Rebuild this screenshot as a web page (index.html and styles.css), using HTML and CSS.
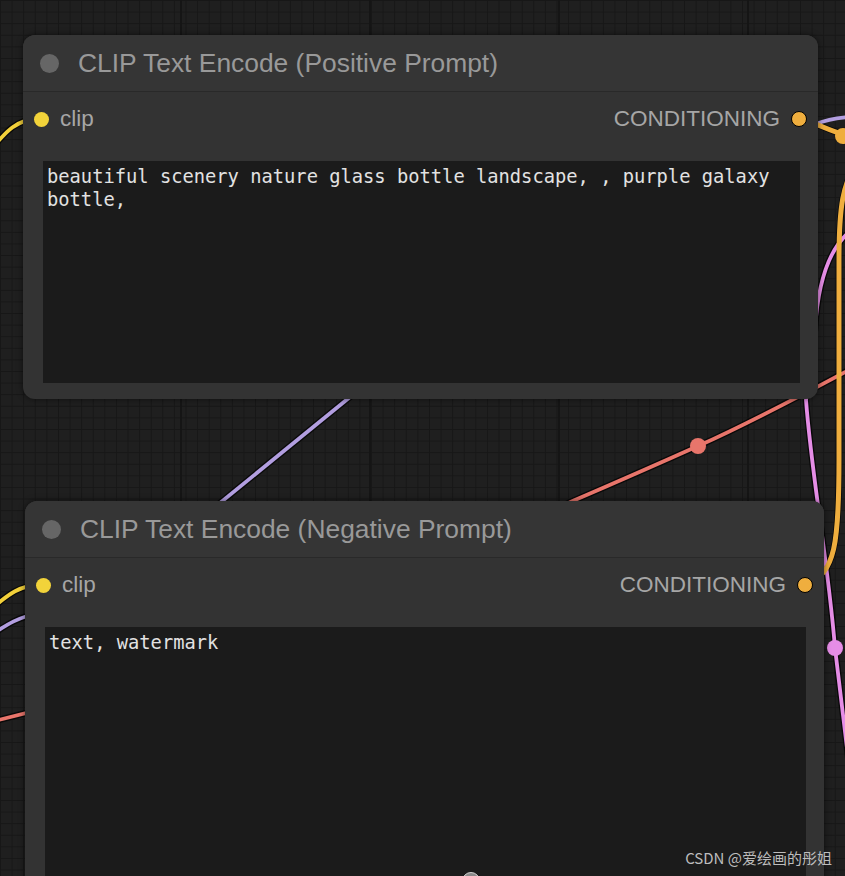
FILE: index.html
```
<!DOCTYPE html>
<html lang="en">
<head>
    <meta charset="UTF-8">
    <meta name="viewport" content="width=device-width, initial-scale=1.0">
    <title>CLIP Text Encode</title>
    <link rel="stylesheet" href="styles.css">
</head>
<body>
    <div class="canvas">
        <!-- links are drawn under the nodes -->
        <svg class="links" width="845" height="876" viewBox="0 0 845 876">
            <g class="link-shadow">
                <path d="M -20 162 C 0 142, 8 120, 40 118"/>
                <path d="M -10 610 C 5 598, 15 586, 42 584"/>
                <path d="M -10 636 C 5 626, 15 618, 42 612"/>
                <path d="M -10 722 C 250 660, 450 560, 575 500 Q 640 472, 698 446 T 860 364"/>
                <path d="M 150 560 L 420 340"/>
                <path d="M 860 225 C 830 240, 818 280, 815 330 L 806 400 C 812 480, 828 560, 835 648 L 852 790"/>
                <path d="M 798 118 C 820 124, 830 132, 850 136"/>
                <path d="M 805 584 C 836 576, 839 540, 839 460 L 839 260 C 839 210, 842 180, 860 160"/>
            </g>
            <path class="link link-clip" d="M -20 162 C 0 142, 8 120, 40 118"/>
            <path class="link link-clip" d="M -10 610 C 5 598, 15 586, 42 584"/>
            <path class="link link-model" d="M -10 636 C 5 626, 15 618, 42 612"/>
            <path class="link link-vae" d="M -10 722 C 250 660, 450 560, 575 500 Q 640 472, 698 446 T 860 364"/>
            <path class="link link-model" d="M 150 560 L 420 340"/>
            <path class="link link-latent" d="M 860 225 C 830 240, 818 280, 815 330 L 806 400 C 812 480, 828 560, 835 648 L 852 790"/>
            <path class="link link-model" d="M 816 124 C 826 120, 836 118, 850 117"/>
            <path class="link link-cond" d="M 798 118 C 820 124, 830 132, 850 136"/>
            <path class="link link-cond" d="M 805 584 C 836 576, 839 540, 839 460 L 839 260 C 839 210, 842 180, 860 160"/>
            <circle class="link-knob knob-vae" cx="698" cy="446" r="8"/>
            <circle class="link-knob knob-latent" cx="835" cy="648" r="8"/>
            <circle class="link-knob knob-cond" cx="843" cy="136" r="8"/>
        </svg>

        <div class="node node-positive">
            <div class="node-title">
                <span class="node-dot"></span>
                <span class="node-name">CLIP Text Encode (Positive Prompt)</span>
            </div>
            <div class="node-slots">
                <div class="slot">
                    <span class="slot-dot dot-clip"></span>
                    <span>clip</span>
                </div>
                <div class="slot">
                    <span>CONDITIONING</span>
                    <span class="slot-dot dot-cond"></span>
                </div>
            </div>
            <div class="node-text">beautiful scenery nature glass bottle landscape, , purple galaxy bottle,</div>
        </div>

        <div class="node node-negative">
            <div class="node-title">
                <span class="node-dot"></span>
                <span class="node-name">CLIP Text Encode (Negative Prompt)</span>
            </div>
            <div class="node-slots">
                <div class="slot">
                    <span class="slot-dot dot-clip"></span>
                    <span>clip</span>
                </div>
                <div class="slot">
                    <span>CONDITIONING</span>
                    <span class="slot-dot dot-cond"></span>
                </div>
            </div>
            <div class="node-text">text, watermark</div>
        </div>

        <span class="handle"></span>
        <div class="watermark">CSDN @爱绘画的彤姐</div>
    </div>
</body>
</html>
```
FILE: styles.css
```
body {
    margin: 0;
    background: #1d1d1d;
    font-family: "Liberation Sans", Arial, sans-serif;
}
.canvas {
    position: relative;
    width: 845px;
    height: 876px;
    overflow: hidden;
    background-color: #1f1f1f;
    background-image:
        linear-gradient(90deg, #151515 1.5px, transparent 1.5px),
        linear-gradient(#171717 1px, transparent 1px),
        linear-gradient(90deg, #171717 1px, transparent 1px);
    background-size: 189px 100%, 11.6px 11.6px, 11.6px 11.6px;
    background-position: 180px 0, 0 0, 0 0;
}
.links {
    position: absolute;
    left: 0;
    top: 0;
}
.link-shadow path {
    fill: none;
    stroke: #000;
    stroke-width: 6.5;
    opacity: 0.7;
}
.link {
    fill: none;
    stroke-width: 3.8;
}
.link-clip { stroke: #f2d03a; }
.link-model { stroke: #b29ee0; }
.link-vae { stroke: #e8756b; }
.link-latent { stroke: #e58de6; }
.link-cond { stroke: #efae3e; stroke-width: 5; }
.knob-vae { fill: #e8756b; }
.knob-latent { fill: #e58de6; }
.knob-cond { fill: #efae3e; }

.node {
    position: absolute;
    display: flex;
    flex-direction: column;
    background: #333333;
    border-radius: 12px;
    overflow: hidden;
    box-shadow: 0 0 6px rgba(0, 0, 0, 0.55);
}
.node-positive {
    left: 23px;
    top: 35px;
    width: 795px;
    height: 364px;
}
.node-negative {
    left: 25px;
    top: 501px;
    width: 799px;
    height: 420px;
}
.node-title {
    display: flex;
    align-items: center;
    gap: 19px;
    height: 56px;
    padding-left: 17px;
    background: #353535;
    border-bottom: 1px solid #292929;
}
.node-dot {
    width: 19px;
    height: 19px;
    border-radius: 50%;
    background: #666666;
}
.node-name {
    font-size: 26.4px;
    color: #999999;
}
.node-slots {
    display: flex;
    justify-content: space-between;
    align-items: center;
    height: 50px;
    padding: 2px 11px 0;
    font-size: 22.5px;
    color: #a6a6a6;
}
.slot {
    display: flex;
    align-items: center;
    gap: 11px;
}
.slot-dot {
    border-radius: 50%;
}
.dot-clip {
    width: 15px;
    height: 15px;
    background: #f2d33a;
}
.dot-cond {
    width: 14px;
    height: 14px;
    background: #efae3e;
    border: 1.5px solid #000;
}
.node-text {
    flex: 1;
    margin: 17px 18px 16px 20px;
    padding: 5px 4px 3px;
    background: #1b1b1b;
    color: #e2e2e2;
    font-family: "DejaVu Sans Mono", Menlo, monospace;
    font-size: 18.75px;
    line-height: 22.5px;
    white-space: pre-wrap;
}
.handle {
    position: absolute;
    left: 462px;
    top: 872px;
    width: 16px;
    height: 16px;
    border-radius: 50%;
    background: #8a8a8a;
    border: 1px solid #d0d0d0;
}
.watermark {
    position: absolute;
    right: 13px;
    bottom: 8px;
    font-family: "Noto Sans CJK SC", sans-serif;
    font-size: 15px;
    color: #bdbdbd;
}
```
